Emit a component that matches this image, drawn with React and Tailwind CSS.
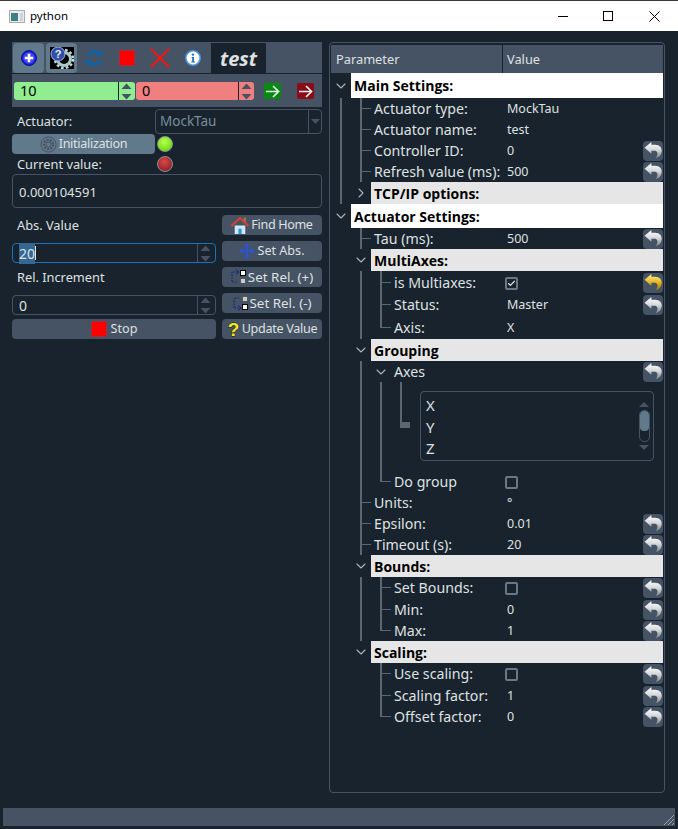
import { Check, ChevronDown, ChevronRight, Move } from 'lucide-react';

const Line = ({ v, t, b }) => (
  <div className="w-5 shrink-0 grid grid-cols-[11px_9px] grid-rows-2 self-stretch">
    <div className={t ? 'border-r-2 border-[#5a6671]' : ''} />
    <div className={v === 'h' ? 'border-b border-[#5a6671]' : ''} />
    <div className={b ? 'border-r-2 border-[#5a6671]' : ''} />
    <div />
  </div>
);

// one indent cell of the tree, by kind
function Cell({ kind }) {
  if (kind === 'down') return <div className="w-5 shrink-0 flex items-center justify-center text-[#aab3bb]"><ChevronDown size={16} strokeWidth={1.6} /></div>;
  if (kind === 'right') return <div className="w-5 shrink-0 flex items-center justify-center text-[#aab3bb]"><ChevronRight size={16} strokeWidth={1.6} /></div>;
  if (kind === 'pipe') return <Line t b />;
  if (kind === 'tee') return <Line v="h" t b />;
  if (kind === 'end') return <Line v="h" t />;
  return <div className="w-5 shrink-0" />;
}

function UndoIcon({ yellow }) {
  const id = yellow ? 'undoY' : 'undoW';
  return (
    <svg width="19" height="19" viewBox="0 0 18 18">
      <defs>
        <linearGradient id={id} x1="0" y1="0" x2="0" y2="1">
          <stop offset="0" stopColor={yellow ? '#fff0a0' : '#ffffff'} />
          <stop offset="0.5" stopColor={yellow ? '#e8b820' : '#d4d7da'} />
          <stop offset="1" stopColor={yellow ? '#9a7410' : '#78818a'} />
        </linearGradient>
      </defs>
      <path d="M0.5 6.5 L7 1 V3.6 H10.5 C15 3.6 17.2 6.6 16.8 10 C16.4 13.4 14 15.6 11 16.4 C12.6 14.6 13 12.6 12.6 11 C12.2 9.6 11.2 9.2 10 9.2 H7 V12 Z" fill={`url(#${id})`} />
    </svg>
  );
}

function ResetBtn({ yellow }) {
  return <div className="w-5 h-5 rounded-[4px] bg-[#455364] flex items-center justify-center shrink-0"><UndoIcon yellow={yellow} /></div>;
}

function Box({ on }) {
  return (
    <div className="w-[13px] h-[13px] -ml-[2px] rounded-[2px] border-2 border-[#6b7884] flex items-center justify-center">
      {on && <Check size={11} strokeWidth={3} className="text-[#e6e8ea]" />}
    </div>
  );
}

function Head({ cells, h, label, white }) {
  return (
    <div className="flex" style={{ height: h }}>
      {cells.map((c, i) => <Cell key={i} kind={c} />)}
      <div className={`flex-1 flex items-center pl-[3px] font-['Open_Sans',sans-serif] font-bold text-[14px] text-black ${white ? 'bg-white' : 'bg-[#e6e6e6]'}`}>{label}</div>
    </div>
  );
}

function Param({ cells, h, label, value, check, reset, yellow }) {
  return (
    <div className="flex" style={{ height: h }}>
      {cells.map((c, i) => <Cell key={i} kind={c} />)}
      <div className="flex-1 flex items-center pl-[3px] min-w-0 relative">
        <span className="flex-1 text-[14.2px] text-[#dfe1e2] whitespace-nowrap">{label}</span>
        <div className="absolute top-px bottom-0 flex items-center text-[12.5px] text-[#dfe1e2]" style={{ left: 507 - 331 - cells.length * 20 }}>
          {check !== undefined ? <Box on={check} /> : value}
        </div>
        {reset && <ResetBtn yellow={yellow} />}
      </div>
    </div>
  );
}

function SpinArrows({ tone }) {
  const c = tone || '#455364';
  return (
    <div className="w-[15px] h-full flex flex-col items-center justify-center gap-[3px]">
      <svg width="11" height="7" viewBox="0 0 11 7"><path d="M5.5 0.5 L10.5 6 H0.5 Z" fill={c} /></svg>
      <svg width="11" height="7" viewBox="0 0 11 7"><path d="M5.5 6.5 L10.5 1 H0.5 Z" fill={c} /></svg>
    </div>
  );
}

function Spin({ children, focus }) {
  return (
    <div className={`h-5 mt-0.5 border rounded-[4px] flex items-center ${focus ? 'border-[#1a72bb]' : 'border-[#455364]'}`}>
      <div className="flex-1 pl-[6px] text-[14px] text-[#dfe1e2] flex items-center">{children}</div>
      <div className="h-full border-l border-[#455364] pr-[2px]"><SpinArrows /></div>
    </div>
  );
}

function Btn({ icon, children, className = 'text-[12.6px]' }) {
  return (
    <div className={`h-5 rounded-[4px] flex items-center justify-center gap-[2px] text-[#dfe1e2] whitespace-nowrap bg-[#455364] ${className}`}>
      {icon}
      <span className="pt-px">{children}</span>
    </div>
  );
}

function GearHelp() {
  return (
    <div className="w-[24px] h-[22px] bg-black relative overflow-hidden">
      <svg width="24" height="22" viewBox="0 0 24 22">
        <circle cx="14" cy="12" r="6.5" fill="none" stroke="#a9c9cd" strokeWidth="3" />
        <circle cx="14" cy="12" r="9" fill="none" stroke="#c5dadc" strokeWidth="2.4" strokeDasharray="2.6 2.2" />
        <circle cx="8" cy="7" r="7" fill="#2f4fa8" stroke="#9fb2e0" strokeWidth="1" />
        <text x="8" y="11" textAnchor="middle" fontSize="11" fontWeight="700" fill="#e8eefc" fontFamily="Liberation Sans, sans-serif">?</text>
      </svg>
    </div>
  );
}

function PlusIcon() {
  return (
    <svg width="16" height="16" viewBox="0 0 16 16">
      <circle cx="8" cy="8" r="7.5" fill="#1a1ae0" stroke="#10108a" />
      <circle cx="8" cy="8" r="5.8" fill="#3f49f0" />
      <path d="M8 3.8 V12.2 M3.8 8 H12.2" stroke="#fff" strokeWidth="2.6" />
    </svg>
  );
}

function RefreshIcon() {
  return (
    <svg width="20" height="20" viewBox="0 0 20 20" fill="none">
      <path d="M4 8 C5 4.5 9 2.6 13 4 L15 5.4" stroke="#0d64a8" strokeWidth="2.8" />
      <path d="M12.5 8 L18.5 8 L18 2 Z" fill="#0d64a8" />
      <path d="M16 12 C15 15.5 11 17.4 7 16 L5 14.6" stroke="#0d64a8" strokeWidth="2.8" />
      <path d="M7.5 12 L1.5 12 L2 18 Z" fill="#0d64a8" />
    </svg>
  );
}

function InfoIcon() {
  return (
    <svg width="16" height="16" viewBox="0 0 16 16">
      <circle cx="8" cy="8" r="7.2" fill="#fff" stroke="#4d94e0" strokeWidth="1.6" />
      <circle cx="8" cy="4.6" r="1.2" fill="#1f6fd0" />
      <path d="M6.6 7 H9 V11.5 H10 V12.6 H6.2 V11.5 H7.2 V8.1 H6.6 Z" fill="#1f6fd0" />
    </svg>
  );
}

function ArrowBtn({ bg }) {
  return (
    <div className={`w-[17px] h-4 rounded-[2px] flex items-center justify-center ${bg}`}>
      <svg width="15" height="13" viewBox="0 0 15 13" fill="none" stroke="#e8f2e8" strokeWidth="1.7">
        <path d="M1 6.5 H13.5 M8 1 L13.5 6.5 L8 12" />
      </svg>
    </div>
  );
}

function HomeIcon() {
  return (
    <svg width="18" height="17" viewBox="0 0 17 16">
      <path d="M3.5 8 H13.5 V16 H3.5 Z" fill="#cfeafb" />
      <path d="M7 11 H10 V16 H7 Z" fill="#3b8fd0" />
      <path d="M12 0.5 H14 V5 H12 Z" fill="#a8784a" />
      <path d="M0.5 8.5 L8.5 1 L16.5 8.5" fill="none" stroke="#d8402e" strokeWidth="2" />
    </svg>
  );
}

function RelIcon({ flip }) {
  return (
    <svg width="15" height="16" viewBox="0 0 15 16">
      <rect x="9.5" y={flip ? 9.5 : 1.5} width="5" height="5" fill="#fff" stroke="#000" />
      <rect x="9.5" y={flip ? 1.5 : 9.5} width="5" height="5" fill="#ccc" stroke="#555" />
      <path d="M6 3 H1 V13 H6" fill="none" stroke="#10208a" strokeWidth="1.2" strokeDasharray="1.4 1.2" />
      <path d={flip ? 'M5 10.5 L8 13 L5 15.5' : 'M5 0.5 L8 3 L5 5.5'} fill="none" stroke="#10208a" strokeWidth="1" />
    </svg>
  );
}

function HelpMark() {
  return (
    <svg width="13" height="19" viewBox="0 0 13 19">
      <text x="6.5" y="15.5" textAnchor="middle" fontSize="19" fontWeight="700" fill="#f2ea20" stroke="#222" strokeWidth="1" paintOrder="stroke" fontFamily="Liberation Sans, sans-serif">?</text>
    </svg>
  );
}

function InitIcon() {
  return (
    <svg width="17" height="17" viewBox="0 0 17 17" fill="none" stroke="#47525e" strokeWidth="1">
      <circle cx="8.5" cy="8.5" r="7.6" />
      <circle cx="8.5" cy="8.5" r="4.6" strokeWidth="2.2" strokeDasharray="2 1.2" />
      <circle cx="8.5" cy="8.5" r="2.6" />
    </svg>
  );
}

const LED = ({ from, to }) => (
  <div className="w-4 h-4 rounded-full border border-[#8a9298]" style={{ background: `radial-gradient(circle at 45% 35%, ${from}, ${to})` }} />
);

export default function App() {
  return (
    <div className="w-[678px] h-[829px] flex flex-col bg-[#19232d] font-['Noto_Sans',sans-serif] overflow-hidden">
      {/* title bar */}
      <div className="h-[31px] shrink-0 bg-white border-t border-[#3a3a3a] flex items-center pl-[9px] pr-px">
        <svg width="16" height="13" viewBox="0 0 16 13">
          <rect x="0.5" y="0.5" width="15" height="12" fill="#e8eaec" stroke="#a8aeb4" />
          <rect x="2" y="3" width="7" height="8" fill="#3f7f86" />
          <rect x="11" y="3" width="3" height="8" fill="#cfd4d8" />
        </svg>
        <span className="ml-[5px] text-[11.5px] text-black">python</span>
        <div className="ml-auto flex items-center">
          <div className="w-[45px] flex justify-center"><div className="w-[10px] h-px bg-black" /></div>
          <div className="w-[46px] flex justify-center"><div className="w-[10px] h-[10px] border border-black" /></div>
          <div className="w-[46px] flex justify-center">
            <svg width="11" height="11" viewBox="0 0 11 11" stroke="#000" strokeWidth="1"><path d="M0.5 0.5 L10.5 10.5 M10.5 0.5 L0.5 10.5" /></svg>
          </div>
        </div>
      </div>

      <div className="flex-1 flex pl-3 pt-[11px] min-h-0">
        {/* left panel */}
        <div className="w-[310px] shrink-0">
          <div className="h-[32px] bg-[#455364] flex items-start pt-px pl-px border-b border-[#19232d]">
            <div className="w-[31px] h-[30px] bg-[#60798b] rounded-[4px] flex items-center justify-center"><PlusIcon /></div>
            <div className="w-[31px] h-[30px] ml-[2px] bg-[#60798b] rounded-[4px] flex items-center justify-center"><GearHelp /></div>
            <div className="w-[32px] h-[30px] ml-px flex items-center justify-center"><RefreshIcon /></div>
            <div className="w-[33px] h-[30px] flex items-center justify-center"><div className="w-4 h-4 bg-[#ff0000] border border-[#a03040]" /></div>
            <div className="w-[33px] h-[30px] flex items-center justify-center">
              <svg width="20" height="20" viewBox="0 0 20 20" stroke="#ff1010" strokeWidth="2"><path d="M1 1 L19 19 M19 1 L1 19" /></svg>
            </div>
            <div className="w-[33px] h-[30px] flex items-center justify-center"><InfoIcon /></div>
            <div className="w-[55px] h-[31px] ml-[2px] bg-[#19232d] flex items-center justify-center font-['Open_Sans',sans-serif] font-bold italic text-[20px] text-[#dfe1e2]">test</div>
          </div>
          <div className="h-[33px] bg-[#455364] flex items-center pl-[2px] pt-px">
            <div className="w-[121px] h-[18px] bg-[#90ee90] rounded-[3px] flex items-center text-[14.5px] text-black">
              <span className="flex-1 pl-[6px]">10</span>
              <div className="h-full border-l border-[#19232d] pr-px"><SpinArrows /></div>
            </div>
            <div className="w-[118px] h-[18px] ml-px bg-[#f08080] rounded-[3px] flex items-center text-[14.5px] text-black">
              <span className="flex-1 pl-[6px]">0</span>
              <div className="h-full border-l border-[#19232d]"><SpinArrows /></div>
            </div>
            <div className="ml-[10px]"><ArrowBtn bg="bg-[#078a12]" /></div>
            <div className="ml-4"><ArrowBtn bg="bg-[#8a0c18]" /></div>
          </div>

          <div className="flex items-center h-[26px] mt-px">
            <span className="w-[143px] pl-[5px] pt-px text-[12.8px] text-[#dfe1e2]">Actuator:</span>
            <div className="flex-1 h-[25px] border border-[#455364] rounded-[4px] flex items-center">
              <span className="flex-1 pl-1 text-[13.5px] text-[#788d9c]">MockTau</span>
              <div className="h-full w-[13px] border-l border-[#455364] flex items-center justify-center">
                <svg width="9" height="5" viewBox="0 0 9 5"><path d="M0 0 H9 L4.5 5 Z" fill="#455364" /></svg>
              </div>
            </div>
          </div>
          <div className="flex items-center h-5">
            <div className="w-[143px] h-5 bg-[#60798b] rounded-[4px] flex items-center justify-center gap-[2px] text-[12.6px] tracking-[-0.3px] text-[#dfe1e2]">
              <InitIcon />
              <span>Initialization</span>
            </div>
            <div className="ml-[2px]"><LED from="#b8ff50" to="#58d000" /></div>
          </div>
          <div className="flex items-center h-5">
            <span className="w-[145px] pl-[5px] pt-px text-[12.8px] text-[#dfe1e2]">Current value:</span>
            <LED from="#d84848" to="#801820" />
          </div>
          <div className="h-[34px] border border-[#455364] rounded-[4px] flex items-center pl-[6px] pt-[3px] text-[13px] text-[#dfe1e2]">0.000104591</div>

          <div className="mt-[7px] grid grid-cols-[204px_100px] gap-x-[6px] gap-y-[6px] auto-rows-[20px]">
            <div className="pl-[5px] pt-px h-5 flex items-center text-[12.8px] text-[#dfe1e2]">Abs. Value</div>
            <Btn icon={<HomeIcon />} className="text-[12.6px] tracking-[-0.35px]">Find Home</Btn>
            <Spin focus>
              <span className="bg-[#346792]">20</span>
              <span className="w-px h-[14px] bg-[#dfe1e2]" />
            </Spin>
            <Btn icon={<Move size={16} className="text-[#2a55d8]" strokeWidth={2.5} />}>Set Abs.</Btn>
            <div className="pl-[5px] pt-px h-5 flex items-center text-[12.8px] text-[#dfe1e2]">Rel. Increment</div>
            <Btn icon={<RelIcon />} className="text-[13.4px]">Set Rel. (+)</Btn>
            <Spin>0</Spin>
            <Btn icon={<RelIcon flip />} className="text-[13.4px]">Set Rel. (-)</Btn>
            <Btn icon={<div className="w-4 h-4 bg-[#ff0000] border border-[#a03040] mr-[2px]" />}>Stop</Btn>
            <Btn icon={<HelpMark />} className="text-[12.6px] tracking-[-0.3px]">Update Value</Btn>
          </div>
        </div>

        {/* parameter tree */}
        <div className="ml-[7px] w-[336px] h-[751px] border border-[#455364] rounded-[4px] p-px pt-[2px] pr-px">
          <div className="h-[28px] bg-[#455364] flex text-[12.8px] text-[#dfe1e2]">
            <div className="w-[172px] border-r border-[#19232d] flex items-center pl-[5px] pt-px">Parameter</div>
            <div className="flex-1 flex items-center pl-1 pt-px">Value</div>
          </div>
          <Head h={25} white cells={['down']} label="Main Settings:" />
          <Param h={21} cells={['pipe', 'tee']} label="Actuator type:" value="MockTau" />
          <Param h={21} cells={['pipe', 'tee']} label="Actuator name:" value="test" />
          <Param h={21} cells={['pipe', 'tee']} label="Controller ID:" value="0" reset />
          <Param h={21} cells={['pipe', 'tee']} label="Refresh value (ms):" value="500" reset />
          <Head h={22} cells={['pipe', 'right']} label="TCP/IP options:" />
          <Head h={24} white cells={['down']} label="Actuator Settings:" />
          <Param h={21} cells={['none', 'tee']} label="Tau (ms):" value="500" reset />
          <Head h={22} cells={['none', 'down']} label="MultiAxes:" />
          <Param h={23} cells={['none', 'pipe', 'tee']} label="is Multiaxes:" check={true} reset yellow />
          <Param h={22} cells={['none', 'pipe', 'tee']} label="Status:" value="Master" reset />
          <Param h={23} cells={['none', 'pipe', 'end']} label="Axis:" value="X" />
          <Head h={22} cells={['none', 'down']} label="Grouping" />
          <div className="flex h-[21px]">
            <Cell kind="none" /><Cell kind="pipe" /><Cell kind="down" />
            <div className="flex-1 flex items-center pl-[3px] text-[14.2px] text-[#dfe1e2]">
              <span className="flex-1">Axes</span>
              <ResetBtn />
            </div>
          </div>
          <div className="flex h-[89px]">
            <Cell kind="none" /><Cell kind="pipe" /><Cell kind="pipe" />
            <div className="w-[29px] shrink-0 flex">
              <div className="w-[11px] h-[46px] border-r-2 border-[#5a6671]" />
              <div className="w-[8px] h-[6px] mt-[40px] bg-[#5a6671]" />
            </div>
            <div className="w-[234px] h-[70px] mt-[9px] border border-[#455364] rounded-[4px] flex">
              <div className="flex-1 pl-[5px] pt-[3px] flex flex-col justify-center text-[15px] leading-[21.5px] text-[#dfe1e2]">
                <span>X</span><span>Y</span><span>Z</span>
              </div>
              <div className="w-[12px] mr-[3px] flex flex-col items-center justify-between py-[10px]">
                <svg width="10" height="5" viewBox="0 0 10 5"><path d="M5 0 L10 5 H0 Z" fill="#455364" /></svg>
                <div className="w-[11px] h-[32px] border border-[#455364] rounded-[5px] overflow-hidden">
                  <div className="h-[20px] bg-[#60798b] rounded-[4px]" />
                </div>
                <svg width="10" height="5" viewBox="0 0 10 5"><path d="M5 5 L10 0 H0 Z" fill="#455364" /></svg>
              </div>
            </div>
          </div>
          <Param h={21} cells={['none', 'pipe', 'end']} label="Do group" check={false} />
          <Param h={21} cells={['none', 'tee']} label="Units:" value="°" />
          <Param h={21} cells={['none', 'tee']} label="Epsilon:" value="0.01" reset />
          <Param h={21} cells={['none', 'tee']} label="Timeout (s):" value="20" reset />
          <Head h={22} cells={['none', 'down']} label="Bounds:" />
          <Param h={22} cells={['none', 'pipe', 'tee']} label="Set Bounds:" check={false} reset />
          <Param h={21} cells={['none', 'pipe', 'tee']} label="Min:" value="0" reset />
          <Param h={21} cells={['none', 'pipe', 'end']} label="Max:" value="1" reset />
          <Head h={22} cells={['none', 'down']} label="Scaling:" />
          <Param h={22} cells={['none', 'none', 'tee']} label="Use scaling:" check={false} reset />
          <Param h={21} cells={['none', 'none', 'tee']} label="Scaling factor:" value="1" reset />
          <Param h={21} cells={['none', 'none', 'end']} label="Offset factor:" value="0" reset />
        </div>
      </div>

      {/* status bar */}
      <div className="h-[18px] shrink-0 mx-[3px] mb-[3px] bg-[#455364] flex justify-end items-end">
        <svg width="12" height="12" viewBox="0 0 12 12" stroke="#9aa5ae" strokeWidth="1"><path d="M11 1 L1 11 M11 5 L5 11 M11 9 L9 11" /></svg>
      </div>
    </div>
  );
}
